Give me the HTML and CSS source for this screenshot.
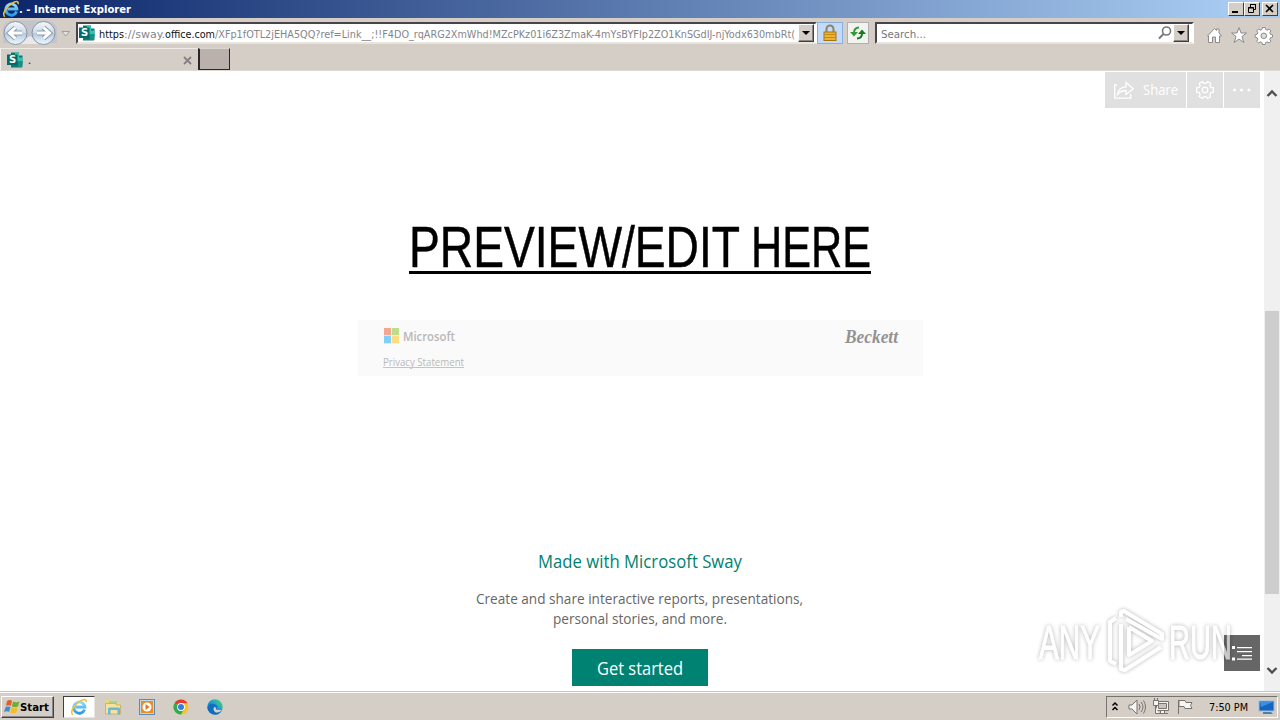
FILE: index.html
```html
<!DOCTYPE html>
<html lang="en">
<head>
<meta charset="utf-8">
<title>. - Internet Explorer</title>
<link rel="stylesheet" href="styles.css">
</head>
<body>
<svg class="defs" width="0" height="0">
  <defs>
    <linearGradient id="ieblue" x1="0" y1="0" x2="0" y2="1"><stop offset="0" stop-color="#8fdcff"/><stop offset="1" stop-color="#2b9be6"/></linearGradient>
    <linearGradient id="orb" x1="0" y1="0" x2="0" y2="1"><stop offset="0" stop-color="#f4f7fb"/><stop offset=".48" stop-color="#cfdbe8"/><stop offset=".52" stop-color="#b5c9de"/><stop offset="1" stop-color="#eefaff"/></linearGradient>
    <linearGradient id="edge" x1="0" y1="1" x2="1" y2="0"><stop offset="0" stop-color="#0b5cb5"/><stop offset=".5" stop-color="#1699d8"/><stop offset="1" stop-color="#5bd66a"/></linearGradient>
    <symbol id="ie" viewBox="0 0 18 18">
      <path d="M14.6 11.5A5.6 5.6 0 1 1 14.9 9H5.5" fill="none" stroke="url(#ieblue)" stroke-width="2.8"/>
      <path d="M3 16.6C-.5 15 3.5 7.500 9.500 3.600C13.500 .9 17 .5 16 4.300" fill="none" stroke="#f2c230" stroke-width="1.500"/>
    </symbol>
    <symbol id="sway" viewBox="0 0 16 16">
      <path d="M4 .5h8v3h3.500v9H15v3H4z" fill="#12766f"/><path d="M8 .5h4v5h3.500v4H8z" fill="#35bfb1"/><path d="M11 9h4.500v6H11z" fill="#168f87"/>
      <rect y="2.500" width="10.500" height="10.500" fill="#036c6a"/>
      <text class="s" x="2" y="11.300">S</text>
    </symbol>
  </defs>
</svg>
<div class="screen">
  <header class="titlebar">
    <svg width="18" height="18"><use href="#ie"/></svg>
    <svg class="title" width="113" height="18"><text x="0" y="13" textLength="112" lengthAdjust="spacingAndGlyphs">. - Internet Explorer</text></svg>
    <div class="winbtns">
      <span class="wb"><svg width="14" height="11"><path d="M3 9h6" stroke="#000" stroke-width="2"/></svg></span>
      <span class="wb"><svg width="14" height="11"><path d="M5 1.500h6M5.500 1v3M10.500 1v5.500H9" stroke="#000" stroke-width="1" fill="none"/><path d="M3.500 4.500h5v5h-5zM3 5h6" stroke="#000" fill="none"/></svg></span>
      <span class="wb close"><svg width="14" height="11"><path d="M3 2l7 7M10 2l-7 7" stroke="#000" stroke-width="1.600"/></svg></span>
    </div>
  </header>

  <div class="navbar">
    <svg class="orbs" width="76" height="30" viewBox="0 0 76 30">
      <path d="M13 2.500H46Q54 2.500 57 10V25H3V10Q5 3 13 2.500z" fill="#c3c5ca"/>
      <path d="M16 26h28l-14-8z" fill="#e9e9eb"/>
      <circle cx="15.500" cy="15" r="11.500" fill="url(#orb)" stroke="#8795a6"/><circle cx="43.500" cy="15" r="11.500" fill="url(#orb)" stroke="#8795a6"/>
      <path d="M22 15H10M15.500 9.500L9.500 15l6 5.500M37 15h12M43.500 9.500l6 5.500l-6 5.500" fill="none" stroke="#8c9dae" stroke-width="5"/>
      <path d="M22 15H10M15.500 9.500L9.500 15l6 5.500M37 15h12M43.500 9.500l6 5.500l-6 5.500" fill="none" stroke="#fff" stroke-width="3"/>
      <path d="M62 13.500h7.500l-3.800 4.500z" fill="#e4e1dc" stroke="#9a9793" stroke-width=".9"/>
    </svg>
    <div class="field address">
      <svg class="fav" width="16" height="16"><use href="#sway"/></svg>
      <svg class="url" width="697" height="18">
        <text class="dark" x="0" y="13" textLength="25" lengthAdjust="spacingAndGlyphs">https</text>
        <text x="25" y="13" textLength="41" lengthAdjust="spacingAndGlyphs">://sway.</text>
        <text class="dark" x="66" y="13" textLength="50" lengthAdjust="spacingAndGlyphs">office.com</text>
        <text x="116" y="13" textLength="580" lengthAdjust="spacingAndGlyphs">/XFp1fOTL2jEHA5QQ?ref=Link__;!!F4DO_rqARG2XmWhd!MZcPKz01i6Z3ZmaK-4mYsBYFIp2ZO1KnSGdIJ-njYodx630mbRt(</text>
      </svg>
      <span class="drop"><svg width="8" height="5"><path d="M0 0h8l-4 4z"/></svg></span>
    </div>
    <span class="lock"><svg width="14" height="18"><path d="M3.500 9V5a3.500 3.500 0 0 1 7 0v4" fill="none" stroke="#8c8464" stroke-width="2"/><rect x="1" y="8" width="12" height="8.500" fill="#eab42d" stroke="#a87412"/><path d="M1 10.500h12M1 13.500h12" stroke="#c88a14"/></svg></span>
    <span class="refresh"><svg width="18" height="18"><path d="M10 3.500C6.500 3.500 5 5 5 9" fill="none" stroke="#319b35" stroke-width="2"/><path d="M1 8h8l-4 4.500z" fill="#319b35"/><path d="M8 14.500c3.500 0 5-1.500 5-5.500" fill="none" stroke="#167c20" stroke-width="2"/><path d="M9 10h8l-4-4.500z" fill="#167c20"/></svg></span>
    <div class="field search">
      <svg width="60" height="18"><text x="1" y="14" textLength="45" lengthAdjust="spacingAndGlyphs">Search...</text></svg>
      <svg class="lens" width="14" height="16"><circle cx="8.500" cy="6" r="4" fill="none" stroke="#77777a" stroke-width="1.600"/><path d="M5.500 9L1 13.500" stroke="#77777a" stroke-width="2"/></svg>
      <span class="drop"><svg width="8" height="5"><path d="M0 0h8l-4 4z"/></svg></span>
    </div>
    <svg class="tools" width="70" height="20" viewBox="0 0 70 20" fill="#fff" stroke="#8b8b8d" stroke-width="1">
      <path d="M1.500 11L8.500 3.500l2 2V4h2.500v4l2.500 3h-2v6.500h-4V12h-3v5.500h-4V11z"/>
      <path d="M33 2.500l2 5.500h5.500L36 11.500l1.800 6L33 14l-4.800 3.500l1.800-6L25.500 8H31z"/>
      <path d="M56.500 2.500h2.600l.6 2 1.500.7 1.900-1.100 1.700 1.800-1 1.800.6 1.500 2.100.6v2.400l-2.100.6-.6 1.500 1 1.900-1.700 1.700-1.900-1-1.500.6-.6 2h-2.600l-.6-2-1.500-.6-1.900 1-1.700-1.700 1-1.900-.6-1.500-2.100-.6V9.800l2.100-.6.6-1.500-1-1.800 1.700-1.800 1.900 1.100 1.500-.7z"/><circle cx="57.800" cy="10.800" r="2.800" fill="#dedbd7"/>
    </svg>
  </div>

  <div class="tabs">
    <div class="tab"><svg width="16" height="16"><use href="#sway"/></svg><span class="tabname">.</span><svg class="x" width="9" height="9"><path d="M1 1l7 7M8 1L1 8" stroke="#858282" stroke-width="1.900"/></svg></div>
    <div class="newtab"></div>
  </div>

  <main class="page">
    <div class="content">
      <div class="swaybar">
        <div class="sb share"><svg width="22" height="20" fill="none" stroke="#fff" stroke-width="1.300"><path d="M4 5H1.700v13.200h16V14"/><path d="M4.500 14.500C5.500 9 8.500 6.800 13 6.800V2.500L20.300 8.800L13 14.500v-4C9 10.500 7 11.500 4.500 14.500z"/></svg><svg width="36" height="20"><text x="0" y="15" textLength="35" lengthAdjust="spacingAndGlyphs">Share</text></svg></div>
        <div class="sb gear"><svg width="20" height="20" viewBox="0 0 20 20" fill="none" stroke="#fff" stroke-width="1.300"><path d="M7.500 1.500L9 3.300h2l1.500-1.800 3.200 1.800-.8 2.300 1 1.700 2.500.5v4.400l-2.500.5-1 1.700.8 2.300-3.200 1.800L11 16.700H9l-1.500 1.800-3.200-1.800.8-2.300-1-1.700-2.500-.5V7.800l2.500-.5 1-1.700-.8-2.300z"/><circle cx="10" cy="10" r="2.800"/></svg></div>
        <div class="sb more"><svg width="20" height="4" fill="#fff"><circle cx="2.500" cy="2" r="1.500"/><circle cx="9.500" cy="2" r="1.500"/><circle cx="17" cy="2" r="1.500"/></svg></div>
      </div>
      <svg class="headline" width="464" height="60"><text x="1" y="45" textLength="331" lengthAdjust="spacingAndGlyphs">PREVIEW/EDIT</text><text x="343" y="45" textLength="120" lengthAdjust="spacingAndGlyphs">HERE</text><path d="M1 50.500h462" stroke="#000" stroke-width="3"/></svg>
      <section class="brand">
        <div class="brandrow">
          <svg width="74" height="18"><path d="M2 1h7v7.300H2z" fill="#f4a68f"/><path d="M10 1h7v7.300h-7z" fill="#bfdc8b"/><path d="M2 9h7v7.300H2z" fill="#80cef9"/><path d="M10 9h7v7.300h-7z" fill="#ffdc80"/><text class="ms" x="21" y="13.500" textLength="52" lengthAdjust="spacingAndGlyphs">Microsoft</text></svg>
          <svg width="58" height="22"><text class="script" x="2" y="16" textLength="53" lengthAdjust="spacingAndGlyphs">Beckett</text></svg>
        </div>
        <svg class="privacy" width="84" height="16"><text x="1" y="12" textLength="81" lengthAdjust="spacingAndGlyphs">Privacy Statement</text><path d="M1 13.500h81" stroke="#c4c4c4"/></svg>
      </section>
      <section class="promo">
        <svg class="made" width="206" height="28"><text x="1" y="21" textLength="204" lengthAdjust="spacingAndGlyphs">Made with Microsoft Sway</text></svg>
        <svg class="copy" width="330" height="42"><text x="1" y="15" textLength="327" lengthAdjust="spacingAndGlyphs">Create and share interactive reports, presentations,</text><text x="78" y="35" textLength="174" lengthAdjust="spacingAndGlyphs">personal stories, and more.</text></svg>
        <div class="start-btn"><svg width="88" height="28"><text x="1" y="21" textLength="86" lengthAdjust="spacingAndGlyphs">Get started</text></svg></div>
      </section>
      <div class="listbtn"><svg width="22" height="16" fill="#fff"><path d="M1 1h3v3H1zM6 2h15v1.200H6zM6 6h15v1.200H6zM11 10h10v1.200H11zM1 12.500h3v3H1zM6 13.500h15v1.200H6z"/></svg></div>
      <svg class="watermark" width="206" height="76" viewBox="0 0 206 76">
        <g class="wm"><text x="7" y="56" textLength="61" lengthAdjust="spacingAndGlyphs">ANY</text><text x="137" y="56" textLength="63" lengthAdjust="spacingAndGlyphs">RUN</text><path d="M84 15L78 19V58L84 61M89 21V66L93 67L129 44M89 14V9L92 8L130 31V36L94 16M97 24V52L120 38L97 24"/></g>
      </svg>
    </div>
    <div class="scroll"><svg width="12" height="8"><path d="M1.500 7L6 2.500L10.500 7" fill="none" stroke="#505050" stroke-width="2.400"/></svg><div class="thumb"></div><svg width="12" height="8"><path d="M1.500 1L6 5.500L10.500 1" fill="none" stroke="#505050" stroke-width="2.400"/></svg></div>
  </main>

  <footer class="taskbar">
    <div class="start"><svg width="16" height="16"><path d="M3 2Q6 0 8 2L6.800 7Q4.500 5.500 2 7z" fill="#e45c2b"/><path d="M9 2.500Q12 4 15.500 2.500L14 7.500Q11 9 7.800 7.500z" fill="#71ae37"/><path d="M1.700 8Q4 6.800 6.500 8L5 13Q3 11.500 0 13z" fill="#388dd5"/><path d="M7.500 8.500Q11 10 13.700 8.500L12.500 13.500Q9 15 6 13.500z" fill="#f4bd26"/></svg><svg width="31" height="16"><text x="0" y="12" textLength="29" lengthAdjust="spacingAndGlyphs">Start</text></svg></div>
    <div class="active"><svg width="18" height="18"><use href="#ie"/></svg></div>
    <div class="apps">
      <svg width="18" height="18"><path d="M2 2h6l1 2h6v6H2z" fill="#ecd67c"/><path d="M5 3h8v4H5z" fill="#a5d595"/><path d="M1.500 5.500h10l1 1.500h4v9h-15z" fill="#f6e29a" stroke="#c5a64a" stroke-width=".7"/><path d="M4 16.500V11q0-1.500 1.500-1.500h9Q16 9.500 16 11v5.500h-2.500V12h-7v4.500z" fill="#66b8df"/></svg>
      <svg width="18" height="18"><rect x="1.500" y="1.500" width="15" height="15" fill="#b9daf0" stroke="#5b8cb5"/><rect x="3" y="3" width="12" height="12" fill="#f38a1c"/><circle cx="9" cy="9" r="4.500" fill="#fff"/><path d="M7.500 6v6l4-3z" fill="#e67613"/></svg>
      <svg width="18" height="18"><circle cx="9" cy="9" r="7.500" fill="#f8c51c"/><path d="M9 9L2.500 5.200A7.500 7.500 0 0 1 15.500 5.200H9z" fill="#e33b2e"/><path d="M9 9L2.500 5.200A7.500 7.500 0 0 0 9 16.500L12 11z" fill="#35a852"/><circle cx="9" cy="9" r="3.900" fill="#fff"/><circle cx="9" cy="9" r="3" fill="#337de1"/></svg>
      <svg width="18" height="18"><circle cx="9" cy="9" r="7.700" fill="url(#edge)"/><path d="M1.500 10Q3 5 8 6Q12 7 11 10Q9 11 10.500 12.500Q13 13.500 16 11.500Q13 18 7 16Q2 14 1.500 10z" fill="#126ebc"/><path d="M9 8.500Q6 11 9 14Q11.500 15.500 15 13Q16.500 11.500 14 12Q9.500 12.500 10 10.500z" fill="#d5d0c9"/></svg>
    </div>
    <div class="tray">
      <svg width="90" height="20" viewBox="0 0 90 20"><path d="M5.500 8.500L8 6l2.500 2.500M5.500 13L8 10.500l2.500 2.500" stroke="#000" stroke-width="1.500" fill="none"/><g fill="#f6f5f2" stroke="#77736f"><path d="M22 8h3l5-5v14l-5-5h-3z"/><path d="M32 7q2 3 0 6M34 5q4 5 0 10M36.500 3.500q4 6.500 0 13" fill="none"/><path d="M49.500 4.500h12v9h-12zM53.500 13.500h4v3h-4zM50 16.500h11"/><path d="M51.500 6.500h8v5h-8z" fill="#c9c5bf"/><path d="M46.500 3.500h5v5h-5zM48.500 8.500v8h3M47.500 1v2.500M50.500 1v2.500"/><path d="M71.500 3v14M72 3.500h6l1 2h6l-1.500 3 1.500 3h-7l-1-2h-5z"/></g></svg>
      <svg class="clock" width="42" height="18"><text x="1" y="13" textLength="39" lengthAdjust="spacingAndGlyphs">7:50 PM</text></svg>
      <svg width="18" height="18"><rect x="1" y="3" width="15" height="10" fill="#1764be" stroke="#9bb9da"/><path d="M2 4h13L3 9z" fill="#3c8ee1"/><path d="M5 14h8l2 2H5z" fill="#4c7fad"/></svg>
    </div>
  </footer>
</div>
</body>
</html>
```
FILE: styles.css
```css
* { box-sizing: border-box; }
body { margin: 0; background: #fff; overflow: hidden; font-family: "DejaVu Sans Condensed", "DejaVu Sans", sans-serif; font-size: 11px; }
svg { display: block; flex: none; overflow: visible; }
.defs { position: absolute; }
.s { font: bold 10px "DejaVu Sans", sans-serif; fill: #fff; }
.screen { width: 1280px; height: 720px; display: flex; flex-direction: column; background: #d5cec7; }
.titlebar { height: 18px; flex: none; display: flex; align-items: center; padding: 0 2px 0 2px; background: linear-gradient(90deg, #0b2569 0%, #a6caf0 96%); }
.title { fill: #fff; font-weight: bold; font-size: 11px; margin-left: -1px; }
.winbtns { display: flex; margin-left: auto; }
.wb { width: 16px; height: 14px; background: #d5cec7; border: 1px solid; border-color: #fff #404040 #404040 #fff; }
.wb.close { margin-left: 2px; }
.navbar { height: 30px; flex: none; display: flex; align-items: center; }
.field { height: 22px; background: #fff; border: 2px solid #fff; border-top-color: #48444a; border-left-color: #48444a; border-bottom-color: #e8e4de; display: flex; align-items: center; }
.address { width: 741px; padding-left: 1px; }
.url { margin-left: 4px; fill: #85858a; }
.url text { transform: translateY(1px); }
.url .dark { fill: #111; }
.drop { width: 16px; height: 18px; background: #d5cec7; border: 1px solid; border-color: #fff #404040 #404040 #fff; box-shadow: inset -1px -1px #8a8782; display: flex; align-items: center; justify-content: center; flex: none; }
.address .drop { margin-left: 2px; }
.lock { width: 26px; height: 22px; background: #c3daf8; border: 1px solid #86afe3; display: flex; align-items: center; justify-content: center; }
.refresh { width: 22px; height: 22px; margin-left: 4px; background: #f2f2ef; border: 1px solid #b1b0b0; display: flex; align-items: center; justify-content: center; }
.search { width: 319px; margin-left: 6px; padding: 0 3px 0 3px; fill: #77777a; }
.search .lens { margin-left: auto; margin-right: 1px; }
.search .drop { fill: #000; }
.tools { margin-left: 12px; margin-top: 3px; }
.tabs { height: 23px; flex: none; display: flex; border-bottom: 1px solid #dedad5; }
.tab { width: 198px; display: flex; align-items: center; padding: 1px 6px 0 6px; border-top: 1px solid #eeeae5; border-left: 1px solid #f3f0ed; }
.tabname { margin-left: 5px; }
.x { margin-left: auto; }
.newtab { width: 32px; height: 22px; background: #bab1ac; border: 1px solid #292727; border-top-color: #d9d5d0; border-width: 1px 1px 1px 2px; }
.page { height: 620px; flex: none; display: flex; background: #fff; }
.content { width: 1264px; position: relative; display: flex; flex-direction: column; align-items: center; padding-left: 16px; }
.swaybar { align-self: flex-end; height: 36px; display: flex; gap: 1px; margin: 1px 4px 0 0; fill: #fff; }
.sb { height: 36px; width: 36px; background: #e0e0e0; display: flex; align-items: center; justify-content: center; }
.share { width: 81px; gap: 8px; font: 14px "Open Sans", sans-serif; }
.headline { margin-top: 114px; font: 57px "Liberation Sans Narrow", "Liberation Sans", sans-serif; }
.headline text { stroke: #000; stroke-width: .5; }
.brand { width: 565px; height: 56px; margin-top: 38px; background: #fafafa; padding: 7px 22px 0 24px; }
.brandrow { display: flex; justify-content: space-between; height: 20px; }
.ms { font: 600 13px "Open Sans", sans-serif; fill: #b7b7b7; }
.script { font: italic bold 19px "Liberation Serif", cursive; fill: #929292; }
.privacy { margin-top: 7px; font: 10px "Open Sans", sans-serif; fill: #b9b9b9; }
.promo { margin-top: 171px; display: flex; flex-direction: column; align-items: center; }
.made { font: 18px "Open Sans", sans-serif; fill: #008272; }
.copy { font: 14.500px "Open Sans", sans-serif; fill: #666; margin-top: 14px; }
.start-btn { width: 136px; height: 37px; margin-top: 18px; background: #008272; display: flex; align-items: center; justify-content: center; font: 18px "Open Sans", sans-serif; fill: #fff; }
.listbtn { position: absolute; left: 1224px; top: 564px; width: 36px; height: 36px; background: #666; display: flex; align-items: center; justify-content: center; }
.watermark { position: absolute; left: 1032px; top: 532px; font: 48px "Liberation Sans Narrow", "Liberation Sans", sans-serif; }
.wm { fill: #fff; stroke: #fff; stroke-width: 1; opacity: .65; filter: drop-shadow(0 0 2px rgba(0, 0, 0, .45)); }
.wm path { fill: none; stroke-width: 4; stroke-linejoin: round; }
.scroll { width: 16px; background: #f0f0f0; display: flex; flex-direction: column; align-items: center; padding: 18px 0 16px 0; }
.thumb { width: 14px; height: 283px; margin-top: 214px; margin-bottom: auto; background: #cdcdcd; }
.taskbar { height: 29px; display: flex; align-items: center; padding: 2px 2px 1px 1px; border-top: 1px solid #c8c5bd; box-shadow: inset 0 1px #fff; }
.start { width: 53px; height: 22px; border: 1px solid; border-color: #fff #404040 #404040 #fff; box-shadow: inset -1px -1px #888; display: flex; align-items: center; padding-left: 2px; font-weight: bold; }
.active { width: 32px; height: 22px; margin-left: 9px; background: #fff; border: 1px solid; border-color: #404040 #e8e4df #e8e4df #404040; display: flex; align-items: center; justify-content: center; }
.apps { display: flex; gap: 16px; margin-left: 9px; }
.tray { width: 172px; height: 22px; margin-left: auto; border: 1px solid; border-color: #77736e #fff #fff #77736e; display: flex; align-items: center; }
.clock { margin-left: 11px; margin-right: 8px; }
```
